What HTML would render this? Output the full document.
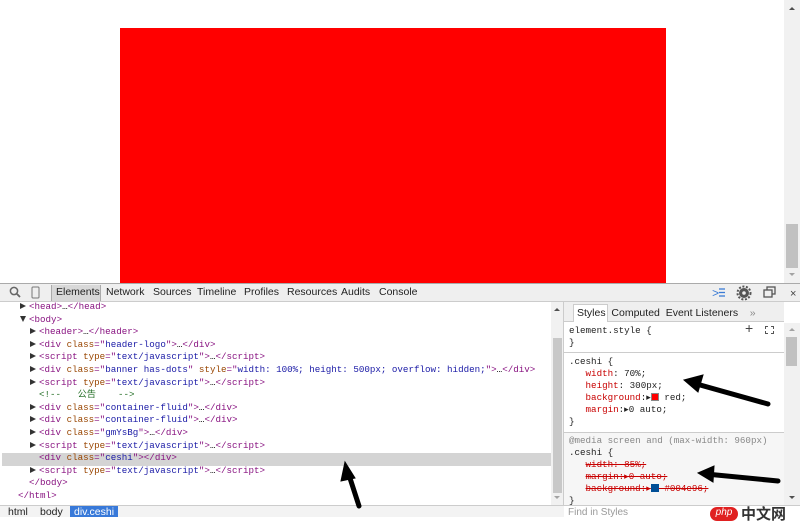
<!DOCTYPE html>
<html><head><style>
*{margin:0;padding:0;box-sizing:border-box}
body{width:800px;height:517px;overflow:hidden;background:#fff;font-family:"Liberation Sans",sans-serif;position:relative}
.abs{position:absolute}
.mono{font-family:"Liberation Mono","Noto Sans CJK SC",monospace;font-size:9.2px;white-space:pre}
.t{color:#881280}.a{color:#994500}.v{color:#1a1aa6}.c{color:#236e25}
.ln{position:absolute;left:0;height:12.6px;line-height:12.6px}
.tri{display:inline-block;width:0;height:0;border-top:3.5px solid transparent;border-bottom:3.5px solid transparent;border-left:6px solid #333;margin-right:3px;vertical-align:0}
.trid{display:inline-block;width:0;height:0;border-left:3.5px solid transparent;border-right:3.5px solid transparent;border-top:6px solid #333;margin-right:3px}
.p{color:#c80000}
.s{text-decoration:line-through}
</style></head><body>
<div class="abs" style="left:120px;top:28px;width:546px;height:255px;background:#f00"></div>
<div class="abs" style="left:784px;top:0;width:16px;height:283px;background:#f1f1f1"></div>
<div class="abs" style="left:786px;top:224px;width:12px;height:44px;background:#c1c1c1"></div>
<div class="abs" style="left:789px;top:7px;border-left:3px solid transparent;border-right:3px solid transparent;border-bottom:3px solid #505050"></div>
<div class="abs" style="left:789px;top:273px;border-left:3px solid transparent;border-right:3px solid transparent;border-top:3px solid #a3a3a3"></div>
<div class="abs" style="left:0;top:283px;width:800px;height:19px;background:#efefef;border-top:1px solid #aaa;border-bottom:1px solid #ccc"></div>
<svg class="abs" style="left:8px;top:286px" width="34" height="14"><circle cx="6" cy="5" r="3.6" fill="none" stroke="#666" stroke-width="1.5"/><line x1="8.5" y1="7.5" x2="12" y2="11" stroke="#666" stroke-width="1.8"/><rect x="24" y="1" width="7" height="11" rx="1" fill="none" stroke="#777"/></svg>
<div class="abs" style="left:51px;top:285px;width:50px;height:16px;background:#d8d8d8;border-left:1px solid #aaa;border-right:1px solid #aaa"></div>
<div class="abs" style="left:56px;top:286px;font-size:10.5px;color:#222;white-space:nowrap"><span style="position:absolute;left:0">Elements</span><span style="position:absolute;left:50px">Network</span><span style="position:absolute;left:97px">Sources</span><span style="position:absolute;left:141px">Timeline</span><span style="position:absolute;left:188px">Profiles</span><span style="position:absolute;left:231px">Resources</span><span style="position:absolute;left:285px">Audits</span><span style="position:absolute;left:323px">Console</span></div>
<svg class="abs" style="left:710px;top:285px" width="90" height="16"><text x="2" y="12" font-size="12" fill="#3a7bd5" font-family="Liberation Mono">&gt;</text><line x1="9" y1="4" x2="15" y2="4" stroke="#3a7bd5" stroke-width="1.3"/><line x1="9" y1="7.5" x2="15" y2="7.5" stroke="#3a7bd5" stroke-width="1.3"/><line x1="9" y1="11" x2="15" y2="11" stroke="#3a7bd5" stroke-width="1.3"/><circle cx="34" cy="8" r="5" fill="#555"/><circle cx="34" cy="8" r="6.5" fill="none" stroke="#555" stroke-width="2" stroke-dasharray="2 1.6"/><circle cx="34" cy="8" r="1.8" fill="#efefef"/><rect x="57" y="2" width="8" height="7" fill="none" stroke="#555" stroke-width="1.3"/><rect x="54" y="5" width="8" height="7" fill="#efefef" stroke="#555" stroke-width="1.3"/><text x="80" y="12" font-size="11" fill="#444">×</text></svg>
<div class="abs" style="left:551px;top:302px;width:13px;height:203px;background:#f1f1f1;border-right:1px solid #ccc"></div>
<div class="abs" style="left:553px;top:338px;width:9px;height:155px;background:#c8c8c8"></div>
<div class="abs" style="left:554px;top:308px;border-left:3px solid transparent;border-right:3px solid transparent;border-bottom:3px solid #505050"></div>
<div class="abs" style="left:554px;top:496px;border-left:3px solid transparent;border-right:3px solid transparent;border-top:3px solid #a3a3a3"></div>
<div class="abs" style="left:2px;top:453px;width:549px;height:12.6px;background:#d4d4d4"></div>
<div class="abs mono" style="left:0;top:301px;width:550px;height:204px;overflow:hidden">
<div class="ln" style="top:0;left:20px"><span class="tri"></span><span class="t">&lt;head&gt;</span>…<span class="t">&lt;/head&gt;</span></div>
<div class="ln" style="top:12.6px;left:20px"><span class="trid"></span><span class="t">&lt;body&gt;</span></div>
<div class="ln" style="top:25.2px;left:30px"><span class="tri"></span><span class="t">&lt;header&gt;</span>…<span class="t">&lt;/header&gt;</span></div>
<div class="ln" style="top:37.8px;left:30px"><span class="tri"></span><span class="t">&lt;div </span><span class="a">class</span><span class="t">="</span><span class="v">header-logo</span><span class="t">"&gt;</span>…<span class="t">&lt;/div&gt;</span></div>
<div class="ln" style="top:50.4px;left:30px"><span class="tri"></span><span class="t">&lt;script </span><span class="a">type</span><span class="t">="</span><span class="v">text/javascript</span><span class="t">"&gt;</span>…<span class="t">&lt;/script&gt;</span></div>
<div class="ln" style="top:63px;left:30px"><span class="tri"></span><span class="t">&lt;div </span><span class="a">class</span><span class="t">="</span><span class="v">banner has-dots</span><span class="t">" </span><span class="a">style</span><span class="t">="</span><span class="v">width: 100%; height: 500px; overflow: hidden;</span><span class="t">"&gt;</span>…<span class="t">&lt;/div&gt;</span></div>
<div class="ln" style="top:75.6px;left:30px"><span class="tri"></span><span class="t">&lt;script </span><span class="a">type</span><span class="t">="</span><span class="v">text/javascript</span><span class="t">"&gt;</span>…<span class="t">&lt;/script&gt;</span></div>
<div class="ln c" style="top:88.2px;left:39px">&lt;!--   公告    --&gt;</div>
<div class="ln" style="top:100.8px;left:30px"><span class="tri"></span><span class="t">&lt;div </span><span class="a">class</span><span class="t">="</span><span class="v">container-fluid</span><span class="t">"&gt;</span>…<span class="t">&lt;/div&gt;</span></div>
<div class="ln" style="top:113.4px;left:30px"><span class="tri"></span><span class="t">&lt;div </span><span class="a">class</span><span class="t">="</span><span class="v">container-fluid</span><span class="t">"&gt;</span>…<span class="t">&lt;/div&gt;</span></div>
<div class="ln" style="top:126px;left:30px"><span class="tri"></span><span class="t">&lt;div </span><span class="a">class</span><span class="t">="</span><span class="v">gmYsBg</span><span class="t">"&gt;</span>…<span class="t">&lt;/div&gt;</span></div>
<div class="ln" style="top:138.6px;left:30px"><span class="tri"></span><span class="t">&lt;script </span><span class="a">type</span><span class="t">="</span><span class="v">text/javascript</span><span class="t">"&gt;</span>…<span class="t">&lt;/script&gt;</span></div>
<div class="ln" style="top:151.2px;left:39px"><span class="t">&lt;div </span><span class="a">class</span><span class="t">="</span><span class="v">ceshi</span><span class="t">"&gt;&lt;/div&gt;</span></div>
<div class="ln" style="top:163.8px;left:30px"><span class="tri"></span><span class="t">&lt;script </span><span class="a">type</span><span class="t">="</span><span class="v">text/javascript</span><span class="t">"&gt;</span>…<span class="t">&lt;/script&gt;</span></div>
<div class="ln t" style="top:176.4px;left:29px">&lt;/body&gt;</div>
<div class="ln t" style="top:189px;left:18px">&lt;/html&gt;</div>
</div>
<div class="abs" style="left:0;top:505px;width:564px;height:12px;background:#f3f3f3;border-top:1px solid #ccc"></div>
<div class="abs" style="left:70px;top:506px;width:48px;height:11px;background:#3879d9"></div>
<div class="abs" style="left:8px;top:506px;font-size:10.5px;color:#222">html</div>
<div class="abs" style="left:40px;top:506px;font-size:10.5px;color:#222">body</div>
<div class="abs" style="left:74px;top:506px;font-size:10.5px;color:#fff">div.ceshi</div>
<div class="abs" style="left:564px;top:302px;width:220px;height:20px;background:#efefef;border-bottom:1px solid #ccc"></div>
<div class="abs" style="left:573px;top:304px;width:35px;height:18px;background:#fff;border:1px solid #ccc;border-bottom:none"></div>
<div class="abs" style="left:577px;top:307px;font-size:10.5px;color:#222;white-space:pre">Styles  Computed  Event Listeners    <span style="color:#888">»</span></div>
<div class="abs" style="left:784px;top:323px;width:16px;height:182px;background:#f1f1f1"></div>
<div class="abs" style="left:786px;top:337px;width:11px;height:29px;background:#c1c1c1"></div>
<div class="abs" style="left:789px;top:328px;border-left:3px solid transparent;border-right:3px solid transparent;border-bottom:3px solid #a3a3a3"></div>
<div class="abs" style="left:789px;top:496px;border-left:3px solid transparent;border-right:3px solid transparent;border-top:3px solid #505050"></div>
<div class="abs" style="left:564px;top:352px;width:220px;height:1px;background:#ccc"></div>
<div class="abs" style="left:564px;top:432px;width:220px;height:1px;background:#ccc"></div>
<div class="abs" style="left:564px;top:353px;width:220px;height:79px;background:#fff"></div>
<div class="abs" style="left:564px;top:433px;width:220px;height:72px;background:#f6f6f6"></div>
<div class="abs" style="left:745px;top:320px;font-size:14px;color:#444">+</div>
<div class="abs" style="left:765px;top:326px;width:9px;height:8px;border:1px dashed #555"></div>
<div class="abs mono" style="left:569px;top:325px;line-height:12px;color:#222">element.style {
}</div>
<div class="abs mono" style="left:569px;top:356px;line-height:12px;color:#222">.ceshi {
   <span class="p">width</span>: 70%;
   <span class="p">height</span>: 300px;
   <span class="p">background</span>:▸<span style="display:inline-block;width:8px;height:8px;background:#f00;border:1px solid #888;vertical-align:-1px"></span> red;
   <span class="p">margin</span>:▸0 auto;
}</div>
<div class="abs mono" style="left:569px;top:435px;line-height:12px;color:#222"><span style="color:#888">@media screen and (max-width: 960px)</span>
.ceshi {
   <span class="p s">width: 85%;</span>
   <span class="p s">margin:▸0 auto;</span>
   <span class="p s">background:▸<span style="display:inline-block;width:8px;height:8px;background:#004e96;vertical-align:-1px"></span> #004e96;</span>
}</div>
<div class="abs" style="left:564px;top:505px;width:236px;height:12px;background:#fff;border-top:1px solid #ccc"></div>
<div class="abs" style="left:568px;top:507px;font-size:10px;color:#999">Find in Styles</div>
<div class="abs" style="left:710px;top:507px;width:28px;height:14px;border-radius:8px;background:#e02020;color:#fff;font-size:10px;text-align:center;font-style:italic">php</div>
<div class="abs" style="left:741px;top:503px;font-size:15px;color:#333;font-family:'Noto Sans CJK SC',sans-serif;font-weight:bold">中文网</div>
<svg class="abs" style="left:0;top:0" width="800" height="517">
<g stroke="#000" stroke-linecap="round" fill="#000">
<path d="M768 404 L693 383" stroke-width="5"/><path d="M684 380 L703 375 L698 392Z"/>
<path d="M778 481 L706 474" stroke-width="5"/><path d="M698 473 L714 466 L713 482Z"/>
<path d="M359 506 L348 472" stroke-width="5"/><path d="M345 462 L355 478 L341 481Z"/>
</g></svg>
</body></html>
